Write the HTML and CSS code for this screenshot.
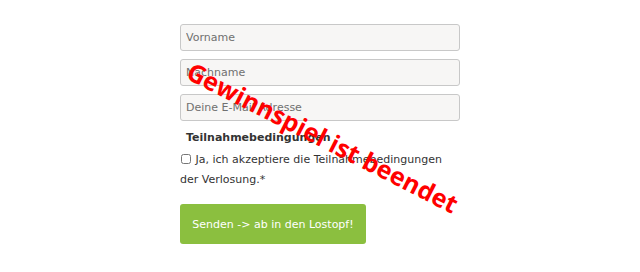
FILE: index.html
```html
<!DOCTYPE html>
<html lang="de">
<head>
<meta charset="utf-8">
<link rel="stylesheet" href="styles.css">
</head>
<body>
<div class="page">
  <form class="form">
    <input class="field" type="text" placeholder="Vorname">
    <input class="field" type="text" placeholder="Nachname">
    <input class="field" type="text" placeholder="Deine E-Mail Adresse">
    <div class="terms-title">Teilnahmebedingungen</div>
    <label class="terms"><input type="checkbox" class="check"> Ja, ich akzeptiere die Teilnahmebedingungen der Verlosung.*</label>
    <button type="button" class="submit">Senden -&gt; ab in den Lostopf!</button>
  </form>
  <div class="stamp">Gewinnspiel ist beendet</div>
</div>
</body>
</html>
```
FILE: styles.css
```css
html, body { margin: 0; padding: 0; background: #fff; }
body { font-family: "DejaVu Sans", Verdana, sans-serif; color: #333; }
.page { position: relative; width: 640px; height: 272px; }
.form { position: relative; top: 24px; margin-left: 180px; width: 280px; display: flex; flex-direction: column; }
.field {
  box-sizing: border-box; width: 280px; height: 27px; margin: 0 0 8px 0;
  border: 1px solid #c8c8c8; border-radius: 3px; background: #f7f6f5;
  padding: 0 5px; font-family: inherit; font-size: 11px; color: #333;
}
.field::placeholder { color: #707070; }
.terms-title { font-weight: bold; font-size: 11px; margin: 0 0 0 6px; line-height: 18px; }
.terms { font-size: 11px; line-height: 20px; margin-top: 3px; width: 270px; }
.check { width: 10px; height: 10px; margin: 0 1px 0 1px; vertical-align: -1px; }
.submit {
  align-self: flex-start; margin-top: 14px; height: 40px; width: 186px;
  background: #8bbf3f; color: #fff; border: 0; border-radius: 3px;
  font-family: inherit; font-size: 11px; padding: 0;
}
.stamp {
  position: absolute; left: 323px; top: 137px; transform: translate(-50%, -50%) rotate(27deg);
  white-space: nowrap; color: #f00; font-family: "Open Sans", sans-serif; font-weight: bold; font-size: 25px;
}
```
